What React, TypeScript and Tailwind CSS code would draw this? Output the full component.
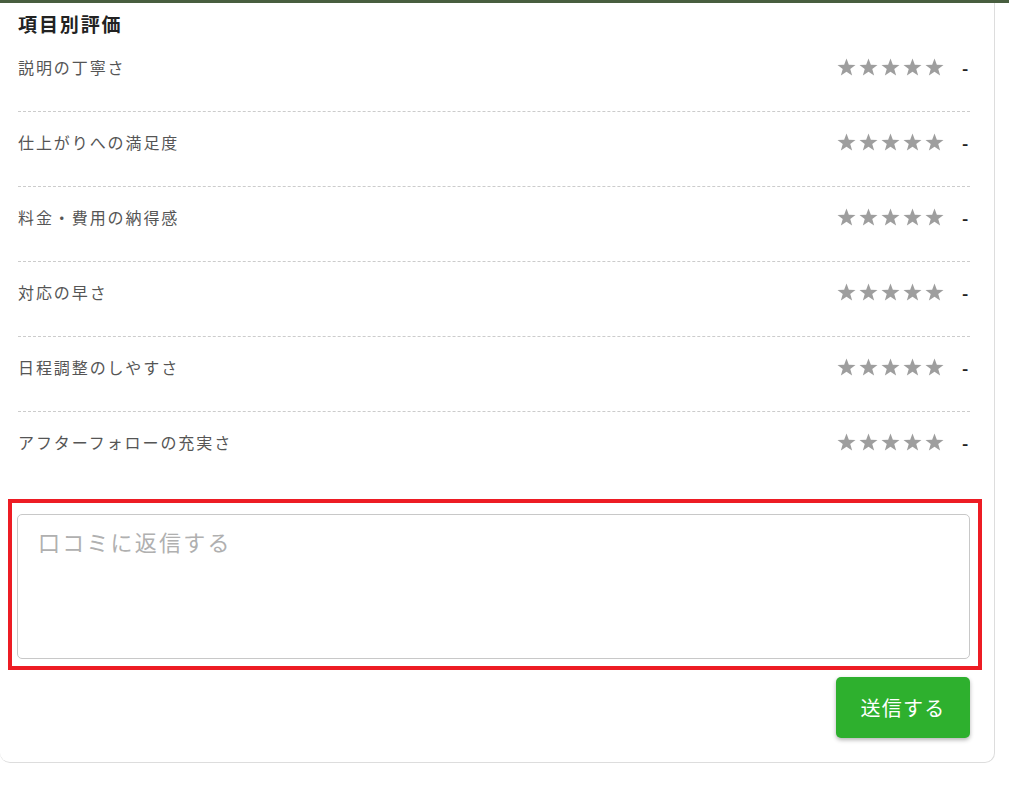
import React from 'react';

const items = [
    '説明の丁寧さ',
    '仕上がりへの満足度',
    '料金・費用の納得感',
    '対応の早さ',
    '日程調整のしやすさ',
    'アフターフォローの充実さ',
];

const font = { fontFamily: '"Noto Sans CJK JP", "Noto Sans", sans-serif' };

const Star: React.FC = () => (
    <svg width="19" height="18" viewBox="0 0 24 23" className="shrink-0">
        <polygon points="12,0.5 15,8.6 23.5,8.8 16.8,14 19.2,22.5 12,17.5 4.8,22.5 7.2,14 0.5,8.8 9,8.6" fill="#9e9e9e" />
    </svg>
);

const RatingRow: React.FC<{ label: string, last: boolean }> = ({ label, last }) => (
    <div className={`flex items-center justify-between pt-[18px] pb-[32px] ${last ? '' : 'border-b border-dashed border-[#cccccc]'}`}>
        <span className="text-[16px] leading-6 tracking-[0.12em] text-[#555555]">{label}</span>
        <div className="flex items-center">
            <div className="flex items-center gap-[3px]">
                <Star /><Star /><Star /><Star /><Star />
            </div>
            <span className="ml-[18px] w-[8px] text-[17px] leading-6 font-bold text-[#222222] translate-y-[1px]">-</span>
        </div>
    </div>
);

export default function App() {
    return (
        <div className="min-h-[787px] bg-white" style={font}>
            <div className="h-[3px] bg-[#485e3f]" />
            <div className="w-[995px] border-r border-b border-[#dddddd] rounded-b-[10px] pl-[18px] pr-[24px] pb-[24px]">
                <h3 className="pt-[7px] text-[19px] leading-[27px] font-bold tracking-[0.1em] text-[#222222]">項目別評価</h3>
                {items.map((label, i) => (
                    <RatingRow key={label} label={label} last={i === items.length - 1} />
                ))}
                <div className="mt-[13px] -ml-[10px] -mr-[12px] border-4 border-[#ed1c24] pt-[11px] pl-[5px] pr-[8px] pb-[7px]">
                    <textarea
                        placeholder="口コミに返信する"
                        className="block w-full h-[145px] resize-none rounded-[5px] border border-[#c8c8c8] px-[20px] py-[10px] text-[22px] leading-[33px] tracking-[0.1em] text-[#333333] placeholder:text-[#b0b0b0] outline-none"
                        style={font}
                    />
                </div>
                <div className="mt-[7px] flex justify-end">
                    <button type="button" className="w-[134px] h-[61px] rounded-[5px] bg-[#2eb02e] text-white text-[20px] tracking-[0.06em] shadow-[0_2px_4px_rgba(0,0,0,0.3)]">送信する</button>
                </div>
            </div>
        </div>
    );
}
